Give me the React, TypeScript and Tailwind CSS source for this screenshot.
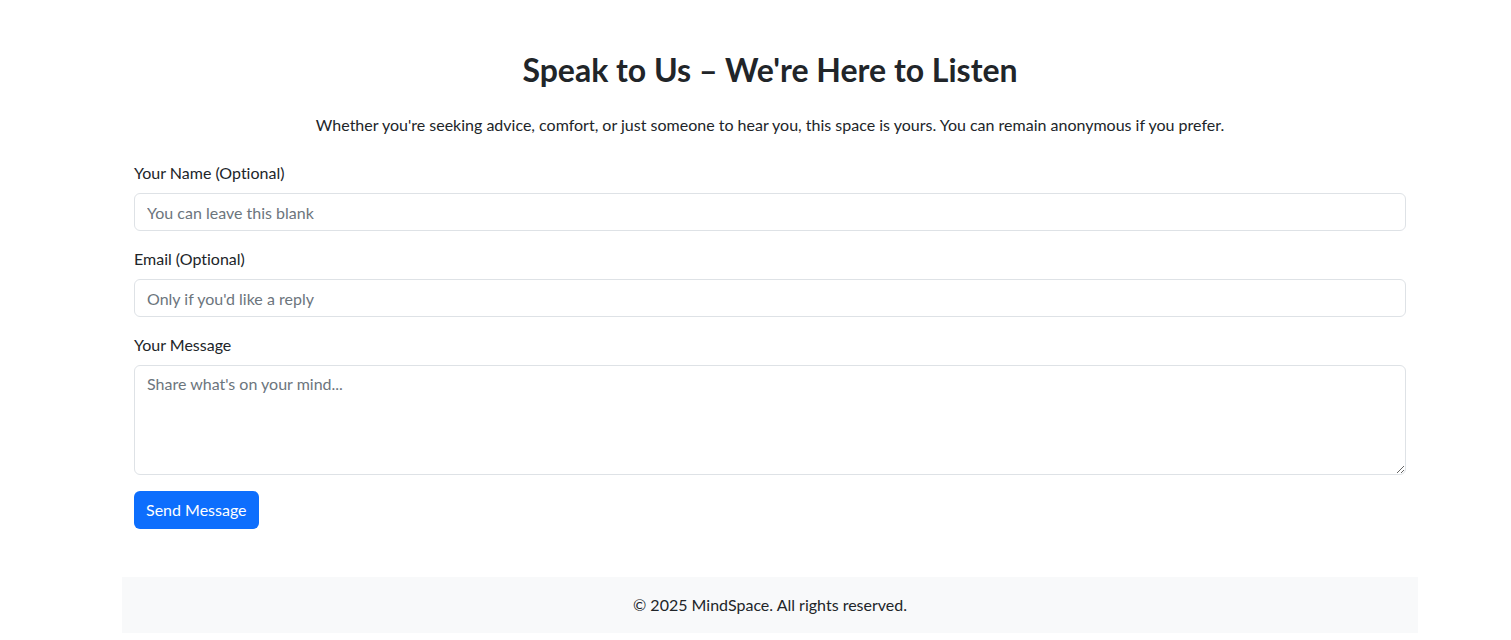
export default function App() {
  return (
    <div className="min-h-screen bg-white text-[#212529] font-['Segoe_UI','Lato',sans-serif] [font-variant-ligatures:none] text-base leading-6">
      <div className="ml-[122px] w-[1296px]">
        <main className="px-3 pt-[51px]">
          <h2 className="text-center text-[32px] leading-[38px] font-bold mb-6">
            Speak to Us – We're Here to Listen
          </h2>
          <p className="text-center mb-6">
            Whether you're seeking advice, comfort, or just someone to hear you, this space is yours. You can remain anonymous if you prefer.
          </p>

          <form onSubmit={(e) => e.preventDefault()}>
            <div className="mb-4">
              <label className="block mb-2">Your Name (Optional)</label>
              <input
                type="text"
                placeholder="You can leave this blank"
                className="block w-full h-[38px] px-3 border border-[#dee2e6] rounded-md placeholder:text-[#6c757d] outline-none [font-variant-ligatures:none]"
              />
            </div>
            <div className="mb-4">
              <label className="block mb-2">Email (Optional)</label>
              <input
                type="email"
                placeholder="Only if you'd like a reply"
                className="block w-full h-[38px] px-3 border border-[#dee2e6] rounded-md placeholder:text-[#6c757d] outline-none [font-variant-ligatures:none]"
              />
            </div>
            <div className="mb-4">
              <label className="block mb-2">Your Message</label>
              <textarea
                rows={4}
                placeholder="Share what's on your mind..."
                className="block w-full h-[110px] px-3 py-1.5 border border-[#dee2e6] rounded-md placeholder:text-[#6c757d] outline-none [font-variant-ligatures:none]"
              />
            </div>
            <button type="submit" className="h-[38px] px-3 bg-[#0d6efd] text-white rounded-md">
              Send Message
            </button>
          </form>
        </main>

        <footer className="mt-12 bg-[#f8f9fa] py-4 text-center">
          <p>© 2025 MindSpace. All rights reserved.</p>
        </footer>
      </div>
    </div>
  );
}
